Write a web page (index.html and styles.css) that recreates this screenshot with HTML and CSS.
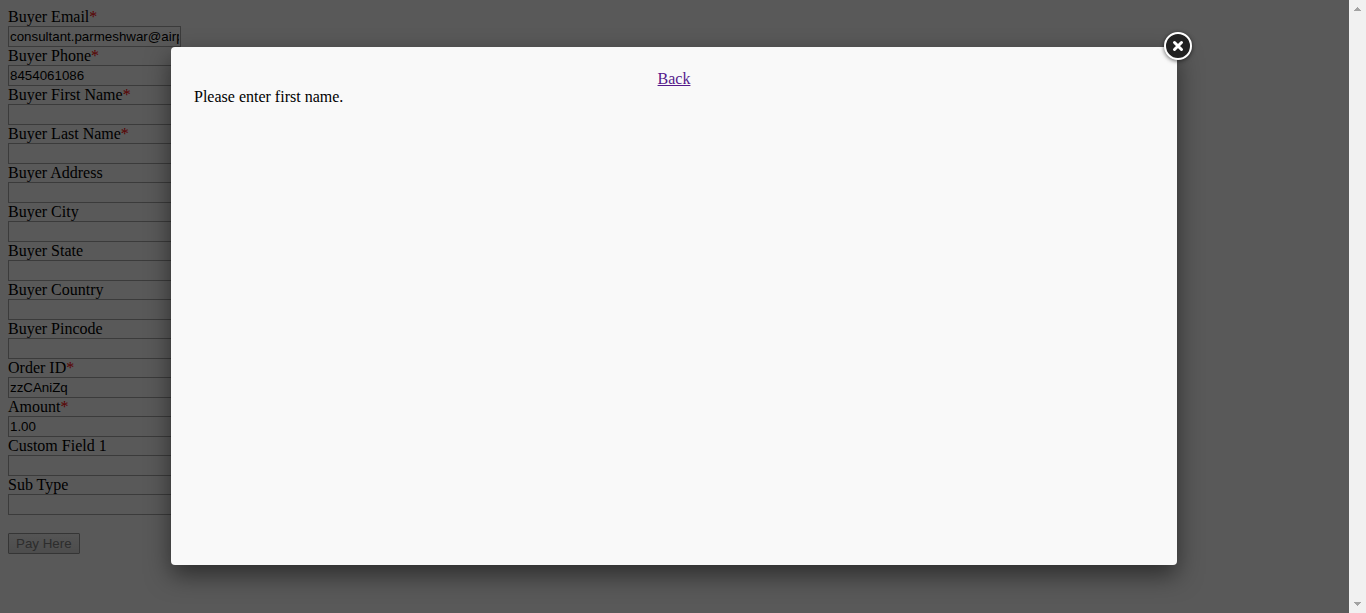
FILE: index.html
```html
<!DOCTYPE html>
<html lang="en">
<head>
<meta charset="utf-8">
<title>Payment</title>
<link rel="stylesheet" href="styles.css">
</head>
<body>
<div class="page">
  <form class="form">
    <label for="email">Buyer Email<span class="required">*</span></label>
    <input class="field" id="email" type="text" value="consultant.parmeshwar@airpay.co.in">
    <label for="phone">Buyer Phone<span class="required">*</span></label>
    <input class="field" id="phone" type="text" value="8454061086">
    <label for="first">Buyer First Name<span class="required">*</span></label>
    <input class="field" id="first" type="text">
    <label for="last">Buyer Last Name<span class="required">*</span></label>
    <input class="field" id="last" type="text">
    <label for="address">Buyer Address</label>
    <input class="field" id="address" type="text">
    <label for="city">Buyer City</label>
    <input class="field" id="city" type="text">
    <label for="state">Buyer State</label>
    <input class="field" id="state" type="text">
    <label for="country">Buyer Country</label>
    <input class="field" id="country" type="text">
    <label for="pincode">Buyer Pincode</label>
    <input class="field" id="pincode" type="text">
    <label for="order">Order ID<span class="required">*</span></label>
    <input class="field" id="order" type="text" value="zzCAniZq">
    <label for="amount">Amount<span class="required">*</span></label>
    <input class="field" id="amount" type="text" value="1.00">
    <label for="custom">Custom Field 1</label>
    <input class="field" id="custom" type="text">
    <label for="subtype">Sub Type</label>
    <input class="field" id="subtype" type="text">
    <button class="pay" type="submit" disabled>Pay Here</button>
  </form>
  <div class="overlay">
    <div class="dialog" role="dialog" aria-label="Payment message">
      <button class="close" type="button" aria-label="Close">
        <svg width="36" height="36" viewBox="0 0 36 36" aria-hidden="true">
          <circle cx="18" cy="18" r="13" fill="#222" stroke="#fff" stroke-width="2"/>
          <path d="M14.5 14.5l7 7M21.5 14.5l-7 7" stroke="#fff" stroke-width="3" stroke-linecap="round"/>
        </svg>
      </button>
      <a class="back" href="#">Back</a>
      <p class="message">Please enter first name.</p>
    </div>
  </div>
</div>
<div class="scrollbar" aria-hidden="true">
  <svg width="17" height="17" viewBox="0 0 17 17" shape-rendering="crispEdges"><path d="M8 7h1v1h1v1h1v1h1v1H5v-1h1V9h1V8h1z" fill="#a3a3a3"/></svg>
  <svg width="17" height="17" viewBox="0 0 17 17" shape-rendering="crispEdges"><path d="M5 6h7v1h-1v1h-1v1H9v1H8V9H7V8H6V7H5z" fill="#a3a3a3"/></svg>
</div>
</body>
</html>
```
FILE: styles.css
```css
* { box-sizing: border-box; }
body {
  margin: 0;
  display: flex;
  height: 100vh;
  overflow: hidden;
  background: #fff;
  color: #000;
  font: 16px/18px "Liberation Serif", "Times New Roman", serif;
}
.page {
  position: relative;
  flex: 1;
  min-width: 0;
}
.form {
  display: flex;
  flex-direction: column;
  align-items: flex-start;
  padding: 8px;
}
.required { color: #f00; }
.field {
  width: 173px;
  height: 21px;
  padding: 1px;
  border: 1px solid #a9a9a9;
  background: #fff;
  color: #000;
  font-family: "Liberation Sans", Arial, sans-serif;
}
.pay {
  height: 21px;
  margin-top: 18px;
  padding: 0 7px;
  border: 1px solid #999;
  border-radius: 1px;
  background: linear-gradient(#f2f2f2, #dcdcdc);
  color: #808080;
  font-family: "Liberation Sans", Arial, sans-serif;
}
.overlay {
  position: absolute;
  inset: 0;
  display: flex;
  padding: 47px 172px 48px 171px;
  background: rgba(0, 0, 0, 0.65);
}
.dialog {
  position: relative;
  flex: 1;
  padding: 23px;
  border-radius: 4px;
  background: #f9f9f9;
  box-shadow: 0 10px 25px rgba(0, 0, 0, 0.5);
}
.back {
  display: block;
  width: fit-content;
  margin: 0 auto;
  color: #551a8b;
}
.message { margin: 0; }
.close {
  position: absolute;
  top: -19px;
  right: -19px;
  padding: 0;
  border: 0;
  background: none;
  line-height: 0;
  cursor: pointer;
}
.close svg { filter: drop-shadow(0 1px 2px rgba(0, 0, 0, 0.6)); }
.scrollbar {
  display: flex;
  flex: 0 0 17px;
  flex-direction: column;
  justify-content: space-between;
  background: #f1f1f1;
}
```
